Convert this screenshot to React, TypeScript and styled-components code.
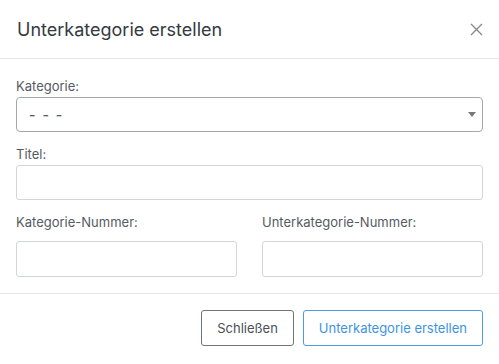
import React from "react";
import styled, { createGlobalStyle } from "styled-components";

const GlobalStyle = createGlobalStyle`
  html, body {
    margin: 0;
    padding: 0;
    background: #ffffff;
  }
  * {
    box-sizing: border-box;
  }
`;

const Modal = styled.div`
  width: 499px;
  height: 364px;
  background: #ffffff;
  font-family: Inter, "Noto Sans", sans-serif;
  display: flex;
  flex-direction: column;
`;

const Header = styled.div`
  height: 59px;
  display: flex;
  align-items: center;
  justify-content: space-between;
  padding: 0 16px 0 17px;
  border-bottom: 1px solid #e3e6ea;
`;

const Title = styled.h5`
  margin: 0;
  font-size: 18px;
  font-weight: 400;
  color: #343a40;
`;

const CloseButton = styled.button`
  border: none;
  background: none;
  padding: 0;
  width: 14px;
  height: 14px;
  display: flex;
  align-items: center;
  justify-content: center;
  cursor: pointer;
`;

const Body = styled.div`
  padding: 19px 16px 16px 16px;
  display: flex;
  flex-direction: column;
  gap: 14px;
  border-bottom: 1px solid #e3e6ea;
`;

const Row = styled.div`
  display: grid;
  grid-template-columns: 1fr 1fr;
  column-gap: 25px;
`;

const Field = styled.div`
  display: flex;
  flex-direction: column;
`;

const Label = styled.label<{ $gap?: number }>`
  font-size: 13px;
  color: #555b62;
  margin-bottom: ${({ $gap }) => $gap ?? 3}px;
  line-height: 16px;
`;

const SelectBox = styled.div`
  height: 35px;
  border: 1px solid #a4a8ad;
  border-radius: 4px;
  display: flex;
  align-items: center;
  justify-content: space-between;
  padding: 0 6px 0 12px;
  font-size: 14px;
  font-weight: 500;
  color: #555b62;
  letter-spacing: 1.6px;
`;

const Caret = styled.span`
  width: 0;
  height: 0;
  border-left: 4px solid transparent;
  border-right: 4px solid transparent;
  border-top: 5px solid #777;
`;

const Input = styled.input<{ $h?: number }>`
  height: ${({ $h }) => $h ?? 36}px;
  width: 100%;
  border: 1px solid #d2d6da;
  border-radius: 3px;
  padding: 0 12px;
  font-family: inherit;
  font-size: 14px;
  outline: none;
`;

const Footer = styled.div`
  display: flex;
  justify-content: flex-end;
  gap: 9px;
  padding: 16px 16px 0 16px;
`;

const Button = styled.button<{ $primary?: boolean }>`
  height: 36px;
  padding: 0 15px;
  background: #ffffff;
  border: 1px solid ${({ $primary }) => ($primary ? "#4a9be8" : "#6c757d")};
  color: ${({ $primary }) => ($primary ? "#3d93e3" : "#495057")};
  border-radius: 3px;
  font-family: inherit;
  font-size: 13px;
  cursor: pointer;
`;

export default function App() {
  return (
    <>
      <GlobalStyle />
      <Modal>
        <Header>
          <Title>Unterkategorie erstellen</Title>
          <CloseButton aria-label="Close">
            <svg width="13" height="13" viewBox="0 0 13 13">
              <path d="M1 1 L12 12 M12 1 L1 12" stroke="#8a8a8a" strokeWidth="1.4" />
            </svg>
          </CloseButton>
        </Header>
        <Body>
          <Field>
            <Label>Kategorie:</Label>
            <SelectBox>
              <span>- - -</span>
              <Caret />
            </SelectBox>
          </Field>
          <Field>
            <Label>Titel:</Label>
            <Input $h={35} />
          </Field>
          <Row>
            <Field>
              <Label $gap={11}>Kategorie-Nummer:</Label>
              <Input />
            </Field>
            <Field>
              <Label $gap={11}>Unterkategorie-Nummer:</Label>
              <Input />
            </Field>
          </Row>
        </Body>
        <Footer>
          <Button>Schließen</Button>
          <Button $primary>Unterkategorie erstellen</Button>
        </Footer>
      </Modal>
    </>
  );
}
